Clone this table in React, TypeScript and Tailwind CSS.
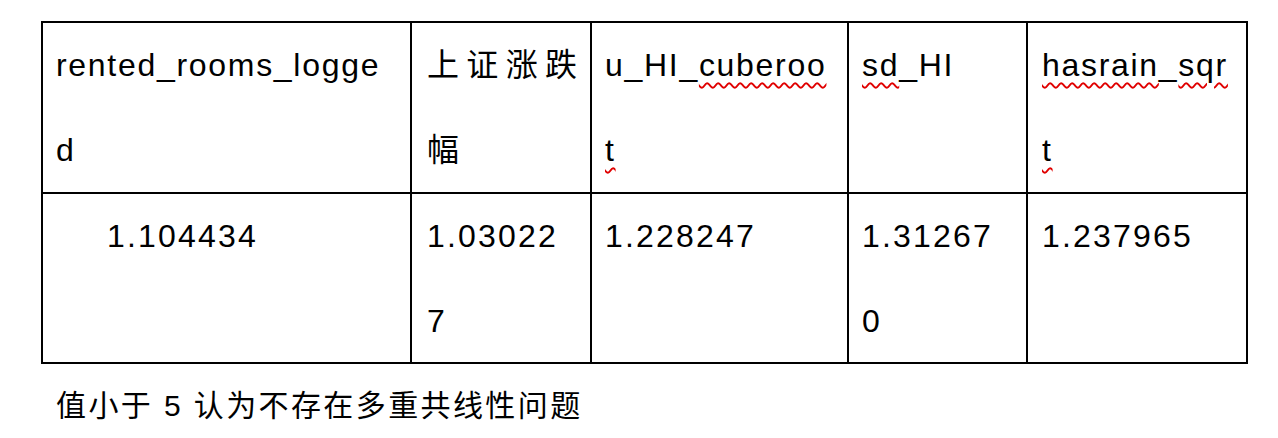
import React from 'react';

const font = { fontFamily: '"Liberation Sans", "Noto Sans CJK SC", sans-serif' };

// red spell-check squiggle under a word
const Sq: React.FC<{ children: React.ReactNode }> = ({ children }) => (
  <span className="underline decoration-wavy decoration-[#e00000] decoration-[1.5px] underline-offset-[6px]">
    {children}
  </span>
);

const Cell: React.FC<{ children: React.ReactNode; className?: string }> = ({ children, className = '' }) => (
  <div className={`border-r-2 border-b-2 border-black pl-[13px] pr-[13px] leading-[85px] whitespace-nowrap ${className}`}>
    {children}
  </div>
);

const App: React.FC = () => {
  return (
    <div className="w-[1278px] h-[438px] bg-white text-black overflow-hidden pt-[21px] pl-[41px]" style={font}>
      <div className="grid grid-cols-[369px_180px_257px_179px_220px] grid-rows-[171px_170px] w-fit border-l-2 border-t-2 border-black text-[32px] tracking-[1.7px]">
        <Cell>
          rented_rooms_logge
          <br />d
        </Cell>
        <Cell className="pl-[15px]">
          <div className="flex justify-between h-[85px] tracking-normal">
            <span>上</span>
            <span>证</span>
            <span>涨</span>
            <span>跌</span>
          </div>
          <div className="h-[84px] tracking-normal">幅</div>
        </Cell>
        <Cell className="pl-[12px]">
          u_HI_<Sq>cuberoo</Sq>
          <br />
          <Sq>t</Sq>
        </Cell>
        <Cell>
          <Sq>sd</Sq>_HI
        </Cell>
        <Cell className="pl-[14px]">
          <Sq>hasrain</Sq>_<Sq>sqr</Sq>
          <br />
          <Sq>t</Sq>
        </Cell>

        <Cell className="pl-[64px] tracking-[2.2px]">1.104434</Cell>
        <Cell className="pl-[15px] tracking-[2.2px]">
          1.03022
          <br />7
        </Cell>
        <Cell className="pl-[12px] tracking-[2.2px]">1.228247</Cell>
        <Cell className="tracking-[2.2px]">
          1.31267
          <br />0
        </Cell>
        <Cell className="pl-[14px] tracking-[2.2px]">1.237965</Cell>
      </div>
      <p className="mt-[20px] pl-[15px] text-[30px] leading-[44px] tracking-[2.4px] whitespace-nowrap">
        值小于 5 认为不存在多重共线性问题
      </p>
    </div>
  );
};

export default App;
